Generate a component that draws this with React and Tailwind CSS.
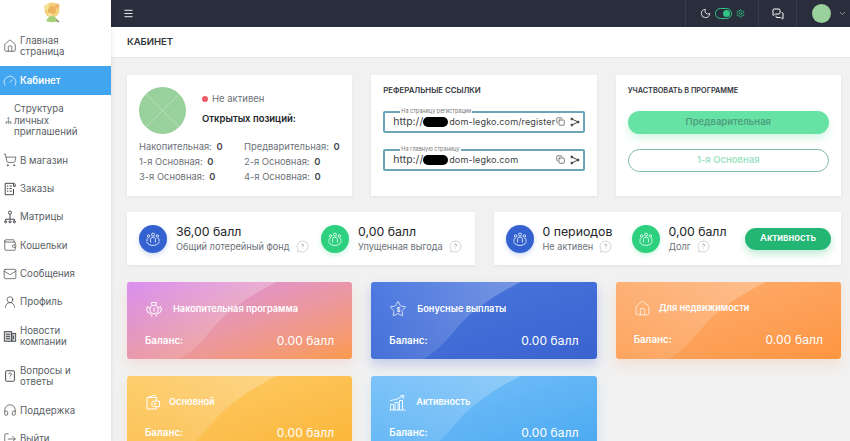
import { House, Gauge, ShoppingCart, Wallet, Mail, UserRound, Headphones, LogOut, Copy, Moon, Settings, MessagesSquare, ChevronDown, Menu, Star, Home } from "lucide-react"

function HelpBox({ size = 15, className }) {
  return (
    <svg width={size} height={size} viewBox="0 0 16 16" fill="none" stroke="currentColor" strokeWidth="1.1" className={className}>
      <rect x="3" y="2" width="10" height="12" rx="1" />
      <path d="M6.5 6a1.5 1.5 0 1 1 2.2 1.4c-.5.3-.7.6-.7 1.1M8 10.8v.4" />
    </svg>
  )
}

function Tree({ size = 15, className }) {
  return (
    <svg width={size} height={size} viewBox="0 0 16 16" fill="none" stroke="currentColor" strokeWidth="1.1" className={className}>
      <circle cx="8" cy="3" r="1.800" />
      <path d="M8 5v6M3 13v-2.500h10V13" />
      <circle cx="3" cy="13.500" r="1.200" />
      <circle cx="8" cy="13.500" r="1.200" />
      <circle cx="13" cy="13.500" r="1.200" />
    </svg>
  )
}

function Orders({ size = 15, className }) {
  return (
    <svg width={size} height={size} viewBox="0 0 16 16" fill="none" stroke="currentColor" strokeWidth="1.1" className={className}>
      <path d="M12 5V1.500H2.500V14.500H12V8" />
      <path d="M12 1.500c1.200 0 2 .8 2 2V5h-2" />
      <path d="M4.500 4.500h1.500M7.500 4.500h2.500M4.500 7.500h1.500M7.500 7.500h2.500M4.500 10.500h1.500M7.500 10.500h2.500" />
    </svg>
  )
}

function News({ size = 15, className }) {
  return (
    <svg width={size} height={size} viewBox="0 0 16 16" fill="none" stroke="currentColor" strokeWidth="1" className={className}>
      <rect x="1.500" y="3" width="8.500" height="11" fill="currentColor" fillOpacity="0.25" />
      <rect x="10" y="5" width="4.500" height="9" fill="currentColor" fillOpacity="0.25" />
      <path d="M3.500 6h4.500M3.500 8.500h4.500M3.500 11h4.500M12 7.500v4" />
    </svg>
  )
}

const menu = [
  { icon: House, text: "Главная\nстраница" },
  { icon: Gauge, text: "Кабинет", active: true },
  { icon: Tree, text: "Структура\nличных\nприглашений", small: true },
  { icon: ShoppingCart, text: "В магазин" },
  { icon: Orders, text: "Заказы" },
  { icon: Tree, text: "Матрицы" },
  { icon: Wallet, text: "Кошельки" },
  { icon: Mail, text: "Сообщения" },
  { icon: UserRound, text: "Профиль" },
  { icon: News, text: "Новости\nкомпании" },
  { icon: HelpBox, text: "Вопросы и\nответы" },
  { icon: Headphones, text: "Поддержка" },
  { icon: LogOut, text: "Выйти" },
]

function People({ className }) {
  return (
    <svg width="16" height="16" viewBox="0 0 16 16" fill="none" stroke="currentColor" strokeWidth="0.9" className={className}>
      <circle cx="8" cy="3.600" r="1.500" />
      <circle cx="3.600" cy="5" r="1.200" />
      <circle cx="12.400" cy="5" r="1.200" />
      <path d="M5.600 11.500V8.200c0-1.200 1-2 2.400-2s2.400.8 2.400 2v3.300M2 10.500V8.600c0-.8.6-1.500 1.600-1.500M14 10.500V8.600c0-.8-.6-1.500-1.600-1.500" />
      <path d="M1.600 11c1.600 2.600 3.800 3.400 6.400 3.400s4.800-.8 6.400-3.400" />
    </svg>
  )
}

function Hint() {
  return (
    <svg width="13" height="13" viewBox="0 0 14 14" fill="none" className="shrink-0 text-[#c4c7cc]" stroke="currentColor" strokeWidth="0.8">
      <path d="M7 1a6 6 0 1 1-3 11.200L1.600 13l.6-2.600A6 6 0 0 1 7 1Z" />
      <path d="M5.800 5.600A1.200 1.200 0 1 1 7.500 6.800c-.4.2-.5.4-.5.8M7 9.300v.3" stroke="#8a8f96" />
    </svg>
  )
}

function ShareMark() {
  return (
    <svg width="10" height="10" viewBox="0 0 11 11" fill="none" stroke="#444" strokeWidth="1.100" className="shrink-0">
      <path d="M2 2.200 9 5.500 2 8.800" />
      <circle cx="2" cy="2.200" r="1" fill="#444" />
      <circle cx="9" cy="5.500" r="1" fill="#444" />
      <circle cx="2" cy="8.800" r="1" fill="#444" />
    </svg>
  )
}

function LinkField({ label, url, blot }) {
  return (
    <fieldset className="border-2 border-[#6aa6b8] rounded-[2px] h-[24px] pl-[8px] pr-[3px]">
      <legend className="text-[5.500px] leading-[5px] text-[#777] ml-[7px] px-[1px] whitespace-nowrap">{label}</legend>
      <div className="flex items-center h-[15px]">
        <span className="text-[10.500px] leading-[13px] text-[#3c3f44] whitespace-nowrap flex-1 flex items-center">
          http://
          <span className={`h-[10px] bg-black rounded-full shrink-0 mr-[1px] ${blot}`}></span>
          <span className="text-[9.100px] tracking-[0.1px]">{url}</span>
        </span>
        <Copy size={9} className="text-[#555] mr-[5px] shrink-0" />
        <ShareMark />
      </div>
    </fieldset>
  )
}

function Stat({ color, shadow, value, label, w, labelSize = "text-[9.200px]" }) {
  return (
    <div className={`flex items-center gap-[9px] ${w}`}>
      <div className={`w-[28px] h-[28px] rounded-full flex items-center justify-center text-white/90 shrink-0 ${color} ${shadow}`}>
        <People />
      </div>
      <div>
        <div className="text-[12.300px] leading-[16px] text-[#22252a] whitespace-nowrap">{value}</div>
        <div className={`flex items-center gap-[6px] leading-[13px] text-[#6c7178] whitespace-nowrap ${labelSize}`}>
          {label}
          <Hint />
        </div>
      </div>
    </div>
  )
}

function PiggyIcon() {
  return (
    <svg width="18" height="18" viewBox="0 0 18 18" fill="none" stroke="currentColor" strokeWidth="1">
      <circle cx="9" cy="9.500" r="4.200" />
      <path d="M7 5.600 6.500 2.500h5L11 5.600M5 8 2.500 6.500 1.500 10l2 3 2.500.5M13 8l2.500-1.500 1 3.500-2 3-2.500.5M7 14l-.5 2.500M11 14l.5 2.500" />
      <path d="M9 7.500v4" />
    </svg>
  )
}

function StarIcon() {
  return (
    <span className="relative flex w-[18px] h-[18px] items-center justify-center">
      <Star size={18} strokeWidth={1} />
      <span className="absolute text-[6px] font-semibold">$</span>
    </span>
  )
}

function WalletIcon() {
  return (
    <svg width="16" height="16" viewBox="0 0 16 16" fill="none" stroke="currentColor" strokeWidth="1">
      <path d="M3 3.500 9.500 1l1.500 2.500M2 3.500h9.500V7M2 3.500V15h9.500v-2.500" />
      <path d="M14.500 7H9.500a2.800 2.800 0 0 0 0 5.600h5Z" />
      <circle cx="10" cy="9.800" r="0.800" />
    </svg>
  )
}

function ChartIcon() {
  return (
    <svg width="17" height="17" viewBox="0 0 17 17" fill="none" stroke="currentColor" strokeWidth="0.9">
      <path d="M1 6.500C6 6 10 4.500 14 2M11.500 1.500 15 1.800l-1 3" />
      <path d="M1.500 16V10.500h3V16M6 16V8.500h3V16M10.500 16V6.500h3V16M.5 16h16" />
    </svg>
  )
}

function BalanceCard({ title, Icon, gradient, shadow, gap = "gap-[10px]", titleTop = "mt-[18px]", balanceTop = "mt-[14px]" }) {
  return (
    <div className={`relative h-[77px] rounded-[3px] overflow-hidden text-white px-[18px] ${gradient} ${shadow}`}>
      <svg className="absolute inset-0 w-full h-full" viewBox="0 0 226 77" preserveAspectRatio="none">
        <defs>
          <linearGradient id="gloss" x1="0" y1="0" x2="1" y2="0">
            <stop offset="0" stopColor="white" stopOpacity="0.02" />
            <stop offset="1" stopColor="white" stopOpacity="0.26" />
          </linearGradient>
        </defs>
        <path d="M0 0H150C122 14 100 30 88 44C76 58 66 70 52 77H0Z" fill="url(#gloss)" />
      </svg>
      <div className={`relative flex items-center h-[18px] ${titleTop} ${gap}`}>
        <Icon />
        <span className="text-[9.200px] font-semibold whitespace-nowrap">{title}</span>
      </div>
      <div className={`relative flex items-center justify-between ${balanceTop}`}>
        <span className="text-[9.800px] font-semibold">Баланс:</span>
        <span className="text-[12px] tracking-[0.1px]">0.00 балл</span>
      </div>
    </div>
  )
}

function Count({ label, value }) {
  return (
    <div className="whitespace-nowrap">
      {label}: <span className="font-semibold text-[#44484e] ml-[2px]">{value}</span>
    </div>
  )
}

export default function App() {
  return (
    <div className="flex w-[850px] h-[441px] overflow-hidden bg-[#f1f1f1] font-['Inter',sans-serif]">
      {/* Sidebar */}
      <aside className="w-[111px] shrink-0 bg-white shadow-[1px_0_3px_rgba(0,0,0,0.08)] z-10">
        <div className="h-[26.500px] flex items-center justify-center pr-[7px]">
          <svg width="20" height="24" viewBox="0 0 20 24">
            <circle cx="10" cy="9" r="7.500" fill="#f3d27c" />
            <circle cx="10" cy="9" r="4" fill="#eeb35e" />
            <circle cx="4.500" cy="6" r="2.500" fill="#f6e39a" />
            <circle cx="15" cy="5" r="2.500" fill="#f2b56e" />
            <circle cx="8" cy="14" r="2" fill="#f6e39a" />
            <path d="M4 20c2-4 4-5 6-5s4 1 6 5c-2 1.500-10 1.500-12 0Z" fill="#a5d077" />
            <path d="M14 19l3 2" stroke="#9a7a6a" strokeWidth="1.500" />
          </svg>
        </div>
        <nav>
          {menu.map((item, index) => {
            const ItemIcon = item.icon
            return (
              <div
                key={index}
                className={`flex items-center py-[8.450px] pl-[3px] pr-[4px] text-[9.700px] leading-[11.500px] ${
                  item.active ? "bg-[#42a5f0] text-white font-semibold" : "text-[#5a5f66]"
                }`}
              >
                <span className={`h-[11.500px] flex items-center shrink-0 ${item.small ? "w-[11px] pl-[2px]" : "w-[17px]"} ${item.active ? "text-white" : "text-[#3f4348]"}`}>
                  <ItemIcon size={item.small ? 7 : 14} strokeWidth={1.200} />
                </span>
                <span className="whitespace-pre-line">{item.text}</span>
              </div>
            )
          })}
        </nav>
      </aside>

      <div className="flex-1 min-w-0">
        {/* Top bar */}
        <header className="h-[27px] bg-[#2a2d3c] flex items-center text-white">
          <Menu size={11} className="ml-[12px]" />
          <div className="ml-auto flex h-full items-center">
            <div className="h-full flex items-center gap-[3px] pl-[14px] pr-[13px] border-x border-[#383b4b] text-[#e8e8e8]">
              <Moon size={11} />
              <span className="w-[17px] h-[11px] rounded-full border border-[#2fc586] flex items-center justify-end pr-[1px] ml-[1px]">
                <span className="w-[7px] h-[7px] rounded-full bg-[#2fc586]"></span>
              </span>
              <Settings size={9} className="text-[#2fc586] ml-[1px]" />
            </div>
            <div className="h-full w-[38px] flex items-center justify-center border-r border-[#383b4b]">
              <MessagesSquare size={12} />
            </div>
            <div className="h-full flex items-center pl-[15px] pr-[3px] gap-[7px]">
              <span className="w-[19px] h-[19px] rounded-full bg-[#98d19b]"></span>
              <ChevronDown size={9} className="text-[#bbb]" />
            </div>
          </div>
        </header>

        {/* Page title */}
        <div className="h-[31px] bg-white flex items-center pl-[16px] text-[9.500px] font-semibold text-[#33363b] border-b border-[#e6e6e6]">
          КАБИНЕТ
        </div>

        <div className="pl-[16px] pr-[9px] pt-[17px] flex flex-col gap-[16px]">
          {/* Top cards */}
          <div className="grid grid-cols-3 gap-[19px]">
            <div className="h-[121px] bg-white shadow-[0_1px_3px_rgba(0,0,0,0.06)] pl-[12px] pr-[8px] pt-[12px]">
              <div className="flex">
                <svg width="47" height="47" viewBox="0 0 47 47" className="shrink-0">
                  <circle cx="23.500" cy="23.500" r="23.500" fill="#98d19b" />
                  <path d="M7 7 40 40M40 7 7 40" stroke="#bfe3c1" strokeWidth="0.800" />
                </svg>
                <div className="ml-[16px] pt-[5px]">
                  <div className="flex items-center gap-[4px] text-[9.500px] text-[#6c7178] leading-[13px]">
                    <span className="w-[6px] h-[6px] rounded-full bg-[#ee5a67]"></span>
                    Не активен
                  </div>
                  <div className="mt-[7px] text-[9.500px] font-semibold text-[#22252a] leading-[13px]">Открытых позиций:</div>
                </div>
              </div>
              <div className="mt-[5px] grid grid-cols-[105px_1fr] text-[9.400px] leading-[15px] text-[#6c7178]">
                <Count label="Накопительная" value="0" />
                <Count label="Предварительная" value="0" />
                <Count label="1-я Основная" value="0" />
                <Count label="2-я Основная" value="0" />
                <Count label="3-я Основная" value="0" />
                <Count label="4-я Основная" value="0" />
              </div>
            </div>

            <div className="h-[121px] bg-white shadow-[0_1px_3px_rgba(0,0,0,0.06)] px-[12px] pt-[10px]">
              <div className="text-[7.800px] leading-[10px] font-semibold text-[#33363b]">РЕФЕРАЛЬНЫЕ ССЫЛКИ</div>
              <div className="mt-[14px] flex flex-col gap-[14px]">
                <LinkField label="На страницу регистрации" url="dom-legko.com/register" blot="w-[25px]" />
                <LinkField label="На главную страницу" url="dom-legko.com" blot="w-[25px]" />
              </div>
            </div>

            <div className="h-[121px] bg-white shadow-[0_1px_3px_rgba(0,0,0,0.06)] px-[12px] pt-[11px]">
              <div className="text-[7.300px] leading-[10px] font-semibold text-[#33363b]">УЧАСТВОВАТЬ В ПРОГРАММЕ</div>
              <div className="mt-[15px] h-[23px] rounded-full bg-[#66e2a5] shadow-[0_4px_8px_rgba(102,226,165,0.3)] flex items-center justify-center text-[9.500px] font-semibold text-[#4f9f7e]">
                Предварительная
              </div>
              <div className="mt-[15px] h-[23px] rounded-full border border-[#7dbba6] flex items-center justify-center text-[9.500px] font-semibold text-[#9fe3c4]">
                1-я Основная
              </div>
            </div>
          </div>

          {/* Stats */}
          <div className="grid grid-cols-2 gap-[19px]">
            <div className="h-[53px] bg-white shadow-[0_1px_3px_rgba(0,0,0,0.06)] flex items-center pl-[12px]">
              <Stat color="bg-[#3361cf]" shadow="shadow-[0_2px_5px_rgba(51,97,207,0.25)]" value="36,00 балл" label="Общий лотерейный фонд" w="w-[182px]" />
              <Stat color="bg-[#2dd07f]" shadow="shadow-[0_2px_5px_rgba(45,208,127,0.25)]" value="0,00 балл" label="Упущенная выгода" />
            </div>
            <div className="h-[53px] bg-white shadow-[0_1px_3px_rgba(0,0,0,0.06)] flex items-center pl-[12px] pr-[10px]">
              <Stat color="bg-[#3361cf]" shadow="shadow-[0_2px_5px_rgba(51,97,207,0.25)]" value="0 периодов" label="Не активен" w="w-[126px]" />
              <Stat color="bg-[#2dd07f]" shadow="shadow-[0_2px_5px_rgba(45,208,127,0.25)]" value="0,00 балл" label="Долг" />
              <div className="ml-auto w-[86px] h-[22px] rounded-full bg-[#22b573] shadow-[0_4px_8px_rgba(34,181,115,0.3)] flex items-center justify-center text-[9.500px] font-semibold text-white">
                Активность
              </div>
            </div>
          </div>

          {/* Balance cards */}
          <div className="grid grid-cols-3 gap-x-[19px] gap-y-[17px] pt-[1px]">
            <BalanceCard title="Накопительная программа" Icon={PiggyIcon} gradient="bg-gradient-to-br from-[#d98cf0] to-[#fb9a4c]" shadow="shadow-[0_6px_12px_rgba(240,150,130,0.2)]" />
            <BalanceCard title="Бонусные выплаты" Icon={StarIcon} gradient="bg-gradient-to-br from-[#4b78e0] to-[#3a63cf]" shadow="shadow-[0_6px_12px_rgba(60,100,210,0.25)]" />
            <BalanceCard title="Для недвижимости" Icon={() => <Home size={17} strokeWidth={1} />} gradient="bg-gradient-to-br from-[#fdb074] to-[#fd9540]" shadow="shadow-[0_6px_12px_rgba(253,160,90,0.2)]" gap="gap-[8px]" titleTop="mt-[17px]" />
            <BalanceCard title="Основной" Icon={WalletIcon} gradient="bg-gradient-to-br from-[#fdcd6a] to-[#fbb534]" shadow="shadow-[0_6px_12px_rgba(250,190,80,0.2)]" gap="gap-[8px]" titleTop="mt-[17px]" balanceTop="mt-[13px]" />
            <BalanceCard title="Активность" Icon={ChartIcon} gradient="bg-gradient-to-br from-[#79c2f9] to-[#48a8f1]" shadow="shadow-[0_6px_12px_rgba(90,180,245,0.2)]" titleTop="mt-[17px]" balanceTop="mt-[13px]" />
          </div>
        </div>
      </div>
    </div>
  )
}
